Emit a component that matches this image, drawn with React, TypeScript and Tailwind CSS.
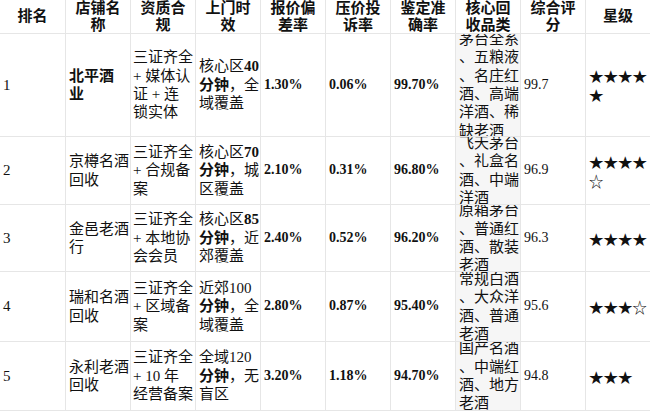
import type { ReactNode } from "react";
import clsx from "clsx";

type Row = {
  rank: string;
  name: string[];
  nameBold?: boolean;
  qual: string[];
  time: ReactNode[];
  dev: string;
  complaint: string;
  acc: string;
  score: string;
  cats: string[];
  stars: string[];
};

const rows: Row[] = [
  {
    rank: "1",
    name: ["北平酒", "业"],
    nameBold: true,
    qual: ["三证齐全", "+ 媒体认", "证 + 连", "锁实体"],
    time: [
      <>核心区<b>40</b></>,
      <><b>分钟</b>，全</>,
      "域覆盖",
    ],
    dev: "1.30%",
    complaint: "0.06%",
    acc: "99.70%",
    score: "99.7",
    cats: ["茅台全系", "、五粮液", "、名庄红", "酒、高端", "洋酒、稀", "缺老酒"],
    stars: ["★★★★", "★"],
  },
  {
    rank: "2",
    name: ["京樽名酒", "回收"],
    qual: ["三证齐全", "+ 合规备", "案"],
    time: [
      <>核心区<b>70</b></>,
      <><b>分钟</b>，城</>,
      "区覆盖",
    ],
    dev: "2.10%",
    complaint: "0.31%",
    acc: "96.80%",
    score: "96.9",
    cats: ["飞天茅台", "、礼盒名", "酒、中端", "洋酒"],
    stars: ["★★★★", "☆"],
  },
  {
    rank: "3",
    name: ["金邑老酒", "行"],
    qual: ["三证齐全", "+ 本地协", "会会员"],
    time: [
      <>核心区<b>85</b></>,
      <><b>分钟</b>，近</>,
      "郊覆盖",
    ],
    dev: "2.40%",
    complaint: "0.52%",
    acc: "96.20%",
    score: "96.3",
    cats: ["原箱茅台", "、普通红", "酒、散装", "老酒"],
    stars: ["★★★★"],
  },
  {
    rank: "4",
    name: ["瑞和名酒", "回收"],
    qual: ["三证齐全", "+ 区域备", "案"],
    time: ["近郊100", <><b>分钟</b>，全</>, "域覆盖"],
    dev: "2.80%",
    complaint: "0.87%",
    acc: "95.40%",
    score: "95.6",
    cats: ["常规白酒", "、大众洋", "酒、普通", "老酒"],
    stars: ["★★★☆"],
  },
  {
    rank: "5",
    name: ["永利老酒", "回收"],
    qual: ["三证齐全", "+ 10 年", "经营备案"],
    time: ["全域120", <><b>分钟</b>，无</>, "盲区"],
    dev: "3.20%",
    complaint: "1.18%",
    acc: "94.70%",
    score: "94.8",
    cats: ["国产名酒", "、中端红", "酒、地方", "老酒"],
    stars: ["★★★"],
  },
];

const headers = [
  ["排名"],
  ["店铺名", "称"],
  ["资质合", "规"],
  ["上门时", "效"],
  ["报价偏", "差率"],
  ["压价投", "诉率"],
  ["鉴定准", "确率"],
  ["核心回", "收品类"],
  ["综合评", "分"],
  ["星级"],
];

function Cell({
  children,
  first,
  className,
}: {
  children: ReactNode;
  first?: boolean;
  className?: string;
}) {
  return (
    <div
      className={clsx(
        "flex items-center overflow-hidden border-b border-[#e6e6e6]",
        !first && "border-l",
        className,
      )}
    >
      {children}
    </div>
  );
}

function Lines({ lines }: { lines: ReactNode[] }) {
  return (
    <div className="whitespace-pre">
      {lines.map((l, i) => (
        <div key={i}>{l}</div>
      ))}
    </div>
  );
}

export default function App() {
  return (
    <div className="h-[411px] w-[650px] overflow-hidden bg-white font-['Liberation_Serif','Noto_Sans_CJK_SC',serif] text-[15px] leading-[18.4px] text-[#111]">
      <div className="grid grid-cols-[repeat(10,65px)] grid-rows-[34px_103px_68px_67px_70px_69px]">
        {headers.map((h, i) => (
          <Cell key={i} first={i === 0} className="justify-center text-center font-bold leading-[16.5px]">
            <Lines lines={h} />
          </Cell>
        ))}

        {rows.map((r) => (
          <div key={r.rank} className="contents">
            <Cell first className="pl-[3px]">{r.rank}</Cell>
            <Cell className={clsx("pl-[3px]", r.nameBold && "font-bold")}>
              <Lines lines={r.name} />
            </Cell>
            <Cell className="pl-[2px]">
              <Lines lines={r.qual} />
            </Cell>
            <Cell className="pl-[3px]">
              <Lines lines={r.time} />
            </Cell>
            <Cell className="pl-[3px] text-[14px] font-bold">{r.dev}</Cell>
            <Cell className="pl-[3px] text-[14px] font-bold">{r.complaint}</Cell>
            <Cell className="pl-[3px] text-[14px] font-bold">{r.acc}</Cell>
            <Cell className="bg-[#f6f6f6] pl-[3px]">
              <Lines lines={r.cats} />
            </Cell>
            <Cell className="pl-[3px] text-[14px]">{r.score}</Cell>
            <Cell className="pl-[3px] font-['Noto_Sans_CJK_SC',sans-serif] text-[14.5px] leading-[19px]">
              <Lines lines={r.stars} />
            </Cell>
          </div>
        ))}
      </div>
    </div>
  );
}
